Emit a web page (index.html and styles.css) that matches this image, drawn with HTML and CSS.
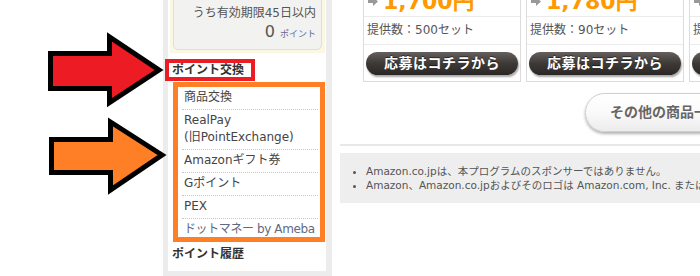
FILE: index.html
```html
<!DOCTYPE html>
<html lang="ja">
<head>
<meta charset="utf-8">
<title>ポイント交換</title>
<link rel="stylesheet" href="styles.css">
</head>
<body>
<div class="page">
  <div class="gutter"></div>
  <aside class="sidebar">
    <div class="side-inner">
      <div class="point-summary">
        <div class="point-box">
          <p class="expire">うち有効期限45日以内</p>
          <p class="pts">0 <span class="unit">ポイント</span></p>
        </div>
      </div>
      <h3 class="side-heading marked">ポイント交換</h3>
      <ul class="exchange-list">
        <li>商品交換</li>
        <li>RealPay<br>(旧PointExchange)</li>
        <li>Amazonギフト券</li>
        <li>Gポイント</li>
        <li>PEX</li>
        <li class="muted">ドットマネー by Ameba</li>
      </ul>
      <h3 class="side-heading plain">ポイント履歴</h3>
    </div>
  </aside>
  <main class="main">
    <div class="cards">
      <div class="card">
        <div class="thumb"></div>
        <div class="price"><svg class="price-arrow" width="10" height="9" viewBox="0 0 10 9"><path d="M0 3h5V0l5 4.5L5 9V6H0z" fill="#999"/></svg>1,700円</div>
        <div class="stock">提供数：500セット</div>
        <div class="apply"><span class="apply-btn">応募はコチラから</span></div>
      </div>
      <div class="card">
        <div class="thumb"></div>
        <div class="price"><svg class="price-arrow" width="10" height="9" viewBox="0 0 10 9"><path d="M0 3h5V0l5 4.5L5 9V6H0z" fill="#999"/></svg>1,780円</div>
        <div class="stock">提供数：90セット</div>
        <div class="apply"><span class="apply-btn">応募はコチラから</span></div>
      </div>
      <div class="card">
        <div class="thumb"></div>
        <div class="price"><svg class="price-arrow" width="10" height="9" viewBox="0 0 10 9"><path d="M0 3h5V0l5 4.5L5 9V6H0z" fill="#999"/></svg>1,500円</div>
        <div class="stock">提供数：100セット</div>
        <div class="apply"><span class="apply-btn">応募はコチラから</span></div>
      </div>
    </div>
    <div class="more-row"><span class="more-btn">その他の商品一覧へ</span></div>
    <div class="divider"></div>
    <div class="notes">
      <ul>
        <li>Amazon.co.jpは、本プログラムのスポンサーではありません。</li>
        <li>Amazon、Amazon.co.jpおよびそのロゴは Amazon.com, Inc. またはその関連会社の商標です。</li>
      </ul>
    </div>
  </main>
</div>
<svg class="annotations" width="170" height="200" viewBox="0 0 170 200">
  <polygon points="50.5,53.5 109.5,53.5 109.5,37 159,70 109.5,102.5 109.5,88.5 50.5,88.5" fill="#ed1c24" stroke="#000" stroke-width="5" stroke-linejoin="miter" stroke-miterlimit="10"/>
  <polygon points="51.5,139.5 110.5,139.5 110.5,122 162,155 110.5,190 110.5,172.5 51.5,172.5" fill="#ff7f27" stroke="#000" stroke-width="5" stroke-linejoin="miter" stroke-miterlimit="10"/>
</svg>
</body>
</html>
```
FILE: styles.css
```css
html, body {
  margin: 0;
  padding: 0;
  background: #fff;
}
body {
  position: relative;
  width: 700px;
  height: 276px;
  overflow: hidden;
  font-family: "DejaVu Sans", "Noto Sans CJK JP", sans-serif;
  color: #444;
}
p, h3, ul { margin: 0; padding: 0; }

.page {
  display: flex;
  align-items: flex-start;
  width: max-content;
  margin-top: -40px;
}
.gutter {
  width: 163px;
  flex: none;
}

/* sidebar */
.sidebar {
  flex: none;
  width: 158px;
  padding: 5px 6px 6px 5px;
  background: #ececec;
}
.side-inner {
  background: #fff;
  padding-bottom: 8px;
}
.point-summary {
  background: #fcf6e5;
  margin: 0 1px 0 2px;
  padding: 3px;
}
.point-box {
  background: #f2f2f1;
  border: 1px solid #dedede;
  border-radius: 5px;
  padding: 35px 5px 5px 5px;
  text-align: right;
}
.expire {
  font-size: 12px;
  line-height: 18px;
  color: #555;
}
.pts {
  font-size: 16px;
  line-height: 20px;
  color: #555;
}
.unit {
  font-size: 9px;
  color: #66688f;
}
.side-heading {
  font-size: 12px;
  font-weight: bold;
  color: #333;
}
.marked {
  width: fit-content;
  margin: 6px 0 0 -3px;
  border: 4px solid #ed1c24;
  padding: 0 7px 0 3px;
  line-height: 14px;
}
.plain {
  margin-top: 4px;
  padding-left: 4px;
  line-height: 17px;
}
.exchange-list {
  list-style: none;
  margin: 1px 1px 0 5px;
  border: 5px solid #ff7f27;
  height: 150px;
  overflow: hidden;
  padding: 0 2px 0 4px;
}
.exchange-list li {
  font-size: 12px;
  line-height: 17px;
  padding: 2px 2px 3px;
  border-bottom: 1px dotted #c8c8c8;
  color: #444;
  white-space: nowrap;
}
.exchange-list li:last-child {
  border-bottom: none;
}
.exchange-list li.muted {
  color: #5f6a80;
  letter-spacing: -0.4px;
}

/* main */
.main {
  flex: none;
  width: 530px;
  padding-left: 8px;
}
.cards {
  display: flex;
  justify-content: center;
  gap: 5px;
  margin-top: 4px;
}
.card {
  width: 158px;
  box-sizing: border-box;
  border: 1px solid #dcdcdc;
  background: #fff;
}
.thumb {
  height: 23px;
}
.price {
  font-size: 22px;
  font-weight: bold;
  line-height: 28px;
  color: #ff9900;
  padding-left: 4px;
  border-bottom: 1px solid #ebebeb;
  white-space: nowrap;
}
.price-arrow {
  margin-right: 5px;
  vertical-align: 3px;
}
.stock {
  font-size: 12px;
  line-height: 27px;
  padding-left: 3px;
  color: #555;
  border-bottom: 1px solid #ebebeb;
}
.apply {
  padding: 7px 2px 6px;
}
.apply-btn {
  display: block;
  height: 23px;
  line-height: 23px;
  border-radius: 12px;
  background: linear-gradient(#65605e, #3d3937 50%, #2a2726);
  box-shadow: 1px 2px 2px rgba(0,0,0,0.35);
  color: #fff;
  font-size: 14px;
  font-weight: bold;
  text-align: center;
  letter-spacing: 0.5px;
  text-shadow: 0 -1px 0 rgba(0,0,0,0.5);
}
.more-row {
  display: flex;
  margin-top: 11px;
  padding-left: 245px;
}
.more-btn {
  display: block;
  line-height: 37px;
  padding: 0 24px;
  border: 1px solid #cfcfcf;
  border-radius: 20px;
  background: linear-gradient(#ffffff, #fafafa 50%, #ececec);
  box-shadow: 0 2px 3px rgba(0,0,0,0.3);
  font-size: 14px;
  font-weight: bold;
  color: #666;
  white-space: nowrap;
}
.divider {
  margin-top: 12px;
  height: 2px;
  background: #e8e8e8;
}
.notes {
  margin-top: 7px;
  background: #eeeeee;
  padding: 11px 0;
}
.notes ul {
  padding-left: 26px;
  list-style: disc;
}
.notes li {
  font-size: 10.5px;
  line-height: 14px;
  color: #555;
  white-space: nowrap;
}

.annotations {
  position: absolute;
  top: 0;
  left: 0;
}
```
